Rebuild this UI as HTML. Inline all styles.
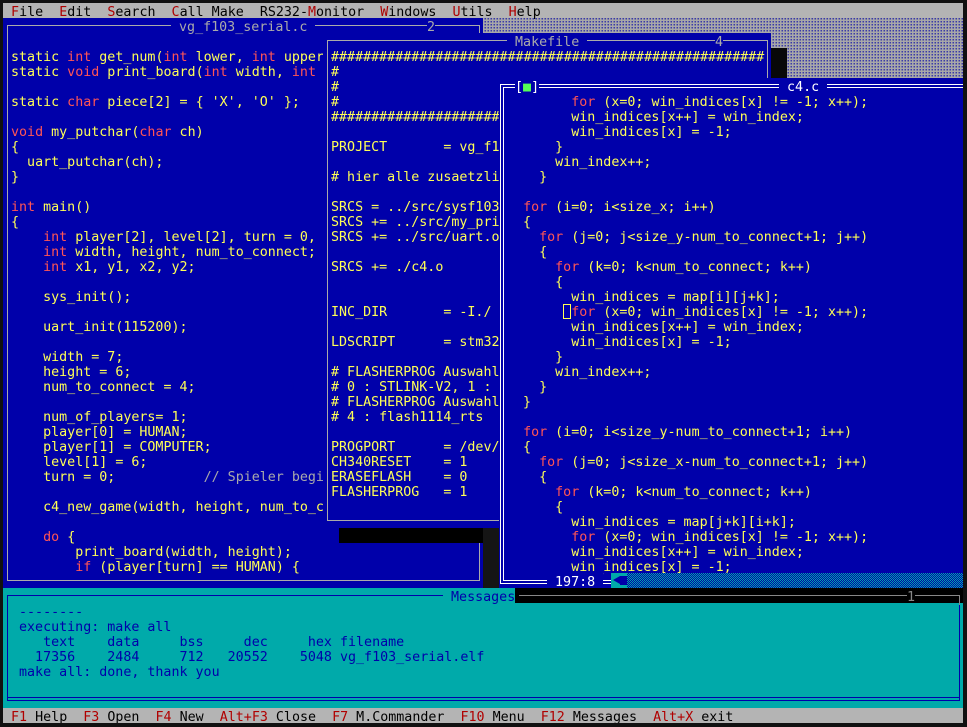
<!DOCTYPE html>
<html><head><meta charset="utf-8"><style>
html,body{margin:0;padding:0;background:#000;}
#o{position:relative;width:967px;height:727px;background:#111;overflow:hidden}
#s{position:absolute;left:3px;top:3px;width:960px;height:720px;overflow:hidden;
 background:#aaa;background-image:repeating-conic-gradient(#3b3ba8 0 25%,#a8a8a8 0 100%);background-size:3px 3px;}
.a{position:absolute}
pre{margin:0;font-family:"DejaVu Sans Mono","Liberation Mono",monospace;font-size:13.33px;line-height:15px;white-space:pre;padding-top:2px;box-sizing:border-box}
.h{height:15px;overflow:visible}
.bl{background:#0000aa}
.y{color:#ffff55}.r{color:#ff5555}.c{color:#aaaaaa}
.f{position:absolute;border:1px solid #aaaaaa;box-sizing:border-box}
.menu{background:#b4b4b4;color:#000}
.k{color:#b00000}
</style></head><body><div id="o"><div id="s">

<pre class="a menu h" style="left:0;top:0;width:960px"> <span class="k">F</span>ile  <span class="k">E</span>dit  <span class="k">S</span>earch  <span class="k">C</span>all Make  RS232-<span class="k">M</span>onitor  <span class="k">W</span>indows  <span class="k">U</span>tils  <span class="k">H</span>elp</pre>

<div class="a bl" style="left:0;top:15px;width:480px;height:570px"></div>
<div class="f" style="left:4px;top:22px;width:473px;height:556px"></div>
<pre class="a bl c h" style="left:168px;top:15px"> vg_f103_serial.c </pre>
<pre class="a bl c h" style="left:424px;top:15px">2</pre>
<pre class="a y" style="left:8px;top:45px">static <span class="r">int</span> get_num(<span class="r">int</span> lower, <span class="r">int</span> upper
static <span class="r">void</span> print_board(<span class="r">int</span> width, <span class="r">int</span> 

static <span class="r">char</span> piece[2] = { 'X', 'O' };

<span class="r">void</span> my_putchar(<span class="r">char</span> ch)
{
  uart_putchar(ch);
}

<span class="r">int</span> main()
{
    <span class="r">int</span> player[2], level[2], turn = 0,
    <span class="r">int</span> width, height, num_to_connect;
    <span class="r">int</span> x1, y1, x2, y2;

    sys_init();

    uart_init(115200);

    width = 7;
    height = 6;
    num_to_connect = 4;

    num_of_players= 1;
    player[0] = HUMAN;
    player[1] = COMPUTER;
    level[1] = 6;
    turn = 0;           <span class="c">// Spieler begi</span>

    c4_new_game(width, height, num_to_c

    <span class="r">do</span> {
        print_board(width, height);
        <span class="r">if</span> (player[turn] == HUMAN) {</pre>

<div class="a bl" style="left:320px;top:30px;width:448px;height:495px"></div>
<div class="f" style="left:324px;top:37px;width:441px;height:481px"></div>
<pre class="a bl c h" style="left:504px;top:30px"> Makefile </pre>
<pre class="a bl c h" style="left:712px;top:30px">4</pre>
<pre class="a y" style="left:328px;top:45px">######################################################
#
#
#
######################################################

PROJECT       = vg_f1

# hier alle zusaetzli

SRCS = ../src/sysf103
SRCS += ../src/my_pri
SRCS += ../src/uart.o

SRCS += ./c4.o


INC_DIR       = -I./

LDSCRIPT      = stm32

# FLASHERPROG Auswahl
# 0 : STLINK-V2, 1 : 
# FLASHERPROG Auswahl
# 4 : flash1114_rts

PROGPORT      = /dev/
CH340RESET    = 1
ERASEFLASH    = 0
FLASHERPROG   = 1</pre>
<div class="a" style="left:768px;top:45px;width:16px;height:30px;background:#080808"></div>
<div class="a" style="left:336px;top:525px;width:144px;height:15px;background:#000"></div>
<div class="a" style="left:480px;top:525px;width:16px;height:60px;background:#151515"></div>

<div class="a bl" style="left:496px;top:75px;width:470px;height:510px"></div>
<div class="a" style="left:497px;top:81px;width:600px;height:500px;border:4px double #ffffff;box-sizing:border-box"></div>
<pre class="a bl h" style="left:512px;top:75px;color:#fff">[<span style="color:#55ff55">■</span>]</pre>
<pre class="a bl h" style="left:776px;top:75px;color:#fff"> c4.c </pre>
<pre class="a y" style="left:504px;top:90px">        <span class="r">for</span> (x=0; win_indices[x] != -1; x++);
        win_indices[x++] = win_index;
        win_indices[x] = -1;
      }
      win_index++;
    }

  <span class="r">for</span> (i=0; i&lt;size_x; i++)
  {
    <span class="r">for</span> (j=0; j&lt;size_y-num_to_connect+1; j++)
    {
      <span class="r">for</span> (k=0; k&lt;num_to_connect; k++)
      {
        win_indices = map[i][j+k];
        <span class="r">for</span> (x=0; win_indices[x] != -1; x++);
        win_indices[x++] = win_index;
        win_indices[x] = -1;
      }
      win_index++;
    }
  }

  <span class="r">for</span> (i=0; i&lt;size_y-num_to_connect+1; i++)
  {
    <span class="r">for</span> (j=0; j&lt;size_x-num_to_connect+1; j++)
    {
      <span class="r">for</span> (k=0; k&lt;num_to_connect; k++)
      {
        win_indices = map[j+k][i+k];
        <span class="r">for</span> (x=0; win_indices[x] != -1; x++);
        win_indices[x++] = win_index;
        win_indices[x] = -1;</pre>
<div class="a" style="left:560px;top:301px;width:8px;height:15px;border:1px solid #ffff55;box-sizing:border-box"></div>
<pre class="a bl h" style="left:544px;top:570px;color:#fff"> 197:8 </pre>
<div class="a" style="left:608px;top:570px;width:16px;height:15px;background:#00aaaa"></div>
<svg class="a" style="left:608px;top:570px" width="16" height="15"><polygon points="2,7 9,3 9,11" fill="#0000aa"/><rect x="9" y="3" width="7" height="9" fill="#0000aa"/></svg>
<div class="a" style="left:624px;top:570px;width:340px;height:15px;background:#00aaaa;background-image:repeating-conic-gradient(#0000aa 0 25%,#00aaaa 0 50%);background-size:2px 2px"></div>

<div class="a" style="left:0;top:585px;width:960px;height:120px;background:#00aaaa"></div>
<div class="f" style="left:4px;top:592px;width:953px;height:106px;border-color:#0000aa"></div>
<div class="a" style="left:4px;top:694px;width:953px;height:1px;background:#0000aa"></div>
<pre class="a h" style="left:440px;top:585px;background:#00aaaa;color:#0000aa"> Messages </pre>
<div class="a" style="left:512px;top:585px;width:448px;height:15px;background:#000"></div>
<div class="a" style="left:516px;top:592px;width:441px;height:1px;background:#888"></div>
<div class="a" style="left:956px;top:592px;width:1px;height:10px;background:#888"></div>
<pre class="a h" style="left:904px;top:585px;background:#000;color:#888">1</pre>
<pre class="a" style="left:16px;top:600px;color:#0000aa">--------
executing: make all
   text    data     bss     dec     hex filename
  17356    2484     712   20552    5048 vg_f103_serial.elf
make all: done, thank you</pre>

<pre class="a menu h" style="left:0;top:705px;width:960px"> <span class="k">F1</span> Help  <span class="k">F3</span> Open  <span class="k">F4</span> New  <span class="k">Alt+F3</span> Close  <span class="k">F7</span> M.Commander  <span class="k">F10</span> Menu  <span class="k">F12</span> Messages  <span class="k">Alt+X</span> exit</pre>

</div></div></body></html>
